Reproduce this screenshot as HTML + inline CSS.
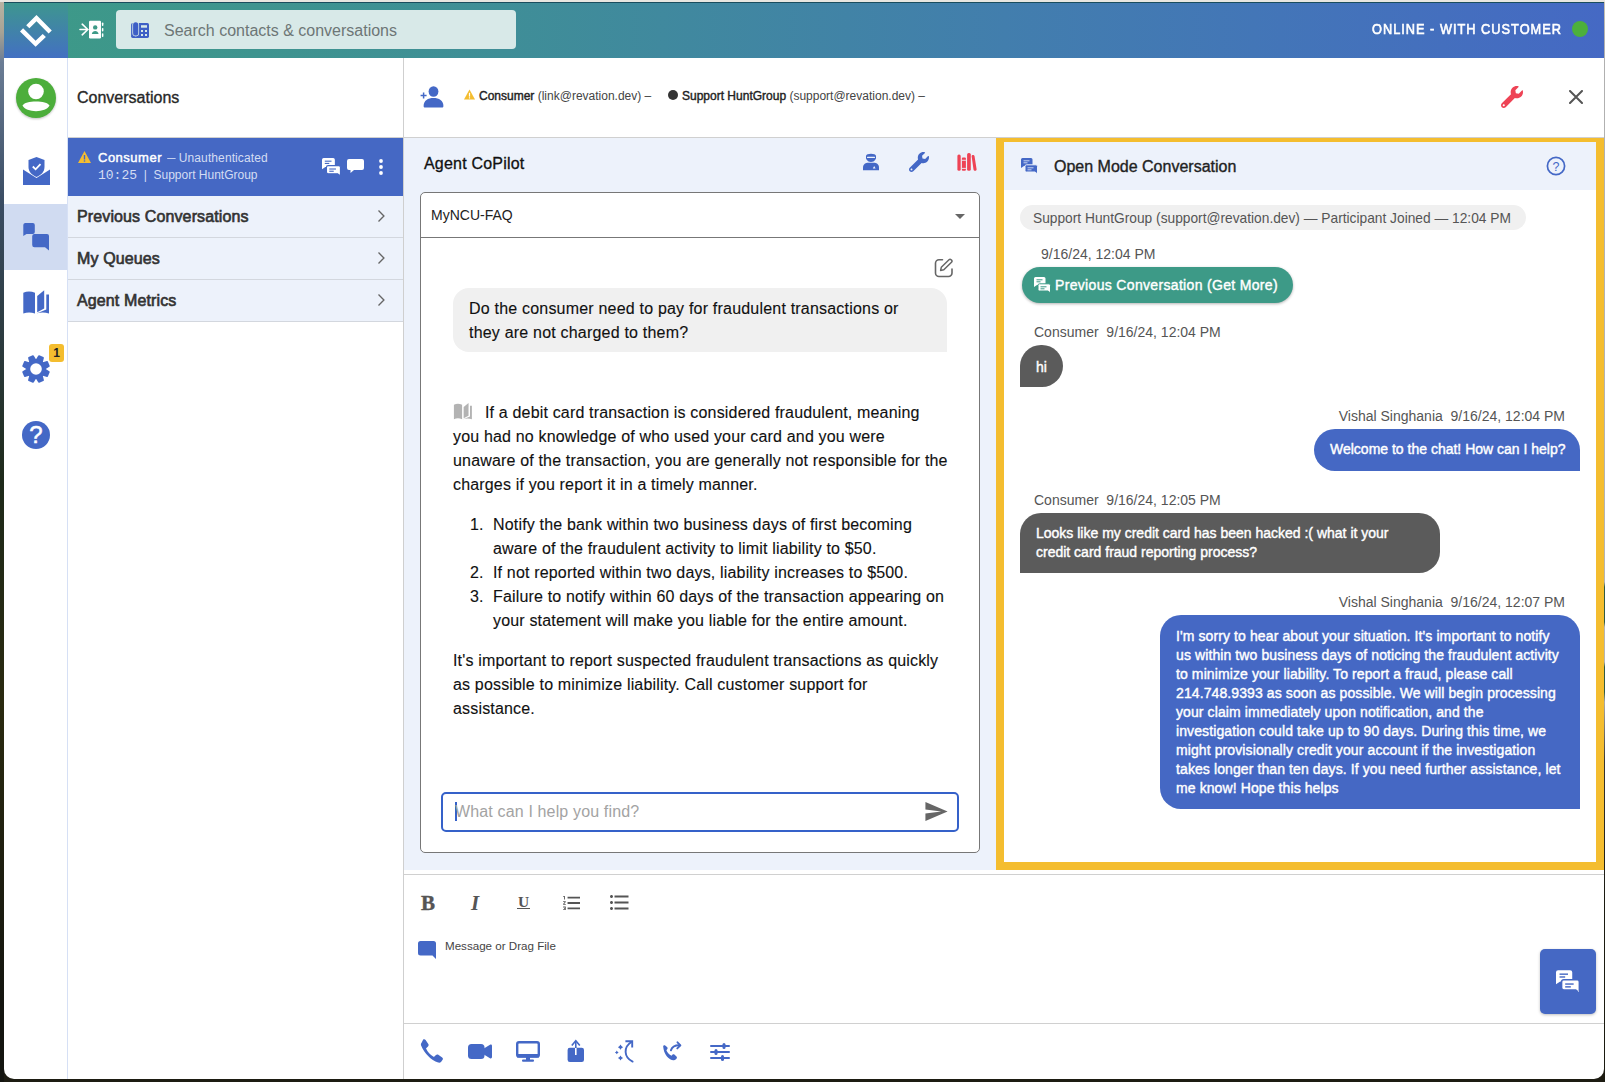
<!DOCTYPE html>
<html><head><meta charset="utf-8">
<style>
*{box-sizing:border-box;margin:0;padding:0}
html,body{width:1605px;height:1082px;overflow:hidden;background:#1c1a10;font-family:"Liberation Sans",sans-serif;color:#222}
.a{position:absolute}
svg{display:block}
#desk{position:absolute;left:0;top:0;width:1605px;height:1082px;background:linear-gradient(180deg,#e8e6e0 0,#e8e6e0 2px,#1d1c12 2px)}
#deskl{position:absolute;left:0;top:2px;width:4px;height:1080px;background:linear-gradient(180deg,#b9b3a3 0,#a7a395 30px,#6b7d95 60px,#3a4c63 200px,#1e2a1a 480px,#2a2a10 700px,#141510 1000px)}
#win{position:absolute;left:4px;top:2px;width:1600px;height:1077px;background:#fff;border-radius:0 0 10px 10px}
#hdr{left:4px;top:2px;width:1600px;height:56px;background:linear-gradient(90deg,#3d9a87 0,#3f8e97 500px,#427ead 1000px,#4376b7 1250px,#4569c4 1600px);border-top:1px solid #1a4d5e}
#logo{left:4px;top:2px;width:64px;height:56px;background:linear-gradient(180deg,#3e968f 0,#4370c2 100%);border-top:1px solid #1a4d5e}
#search{left:116px;top:10px;width:400px;height:39px;background:#d8e9e8;border-radius:4px}
#search .ph{position:absolute;left:48px;top:12px;font-size:16px;color:#6d7676;white-space:nowrap}
#status{left:1372px;top:21px;font-size:14px;color:#fff;letter-spacing:1.1px;-webkit-text-stroke:0.6px #fff;white-space:nowrap;transform:scaleX(0.912);transform-origin:0 0}
#dot{left:1572px;top:21px;width:16px;height:16px;border-radius:50%;background:#4cb03c}
#navb{left:67px;top:58px;width:1px;height:1021px;background:#d6e0f5}
#listb{left:403px;top:58px;width:1px;height:1021px;background:#cfcfcf}
#hline{left:68px;top:137px;width:1536px;height:1px;background:#d0d0d0}
.navsel{left:4px;top:204px;width:63px;height:66px;background:#d0dbf1}
.t{position:absolute;white-space:nowrap}
.row{left:68px;width:335px;height:42px;background:#edf2fb;border-bottom:1px solid #d3d7de}
.row .lb{position:absolute;left:9px;top:12px;font-size:16px;color:#333;letter-spacing:0.12px;-webkit-text-stroke:0.65px #333}
.row svg{position:absolute;left:303px;top:10px}
#copilot{left:404px;top:138px;width:592px;height:732px;background:#edf2fb}
#cbox{left:420px;top:192px;width:560px;height:661px;border:1px solid #777;border-radius:5px;background:#fff}
#omc{left:996px;top:138px;width:608px;height:732px;border:8px solid #f4bd2f;border-top-width:4px;background:#fff}
#omh{left:1004px;top:142px;width:592px;height:48px;background:#edf2fb}
#edline{left:404px;top:874px;width:1200px;height:1px;background:#d0d0d0}
#botline{left:404px;top:1023px;width:1200px;height:1px;background:#d0d0d0}
</style></head><body>
<div id="desk"></div><div id="deskl"></div><div class="a" style="left:1604px;top:2px;width:1px;height:1080px;background:linear-gradient(180deg,#c9c3b3 0,#b0b0b0 40px,#b4b4b4 580px,#2f5a45 585px,#2f5a45 620px,#b4b4b4 625px,#b4b4b4 660px,#2f5a45 665px,#2f5a45 690px,#aaa 700px,#333 760px,#1a1a10 900px)"></div>
<div id="win"></div>
<div id="hdr" class="a"></div>
<div id="logo" class="a"></div>
<!-- logo mark -->
<svg class="a" style="left:0;top:0" width="60" height="56" viewBox="0 0 60 56">
  <path d="M26.2 25.2 L36.5 15.1 L51.8 30.4 L48.6 33.6 L36.5 21.3 L29.4 28.3 Z" fill="#fff"/>
  <path d="M20 31.4 L23.1 28.3 L35.6 40.8 L42.7 33.9 L45.9 37.1 L35.6 46.8 Z" fill="#fff"/>
</svg>
<!-- contact import icon -->
<svg class="a" style="left:78px;top:19px" width="28" height="22" viewBox="78 19 28 22">
  <path d="M80 29.5 H88 M82.2 24.2 L87.8 29.5 L82.2 34.8" stroke="#fff" stroke-width="1.6" fill="none" stroke-linecap="round" stroke-linejoin="round"/>
  <rect x="89" y="20.7" width="12" height="17.7" rx="1.2" fill="#fff"/>
  <circle cx="95.2" cy="27.4" r="2.2" fill="#3d9a87"/>
  <path d="M91.8 34 C92.3 30 98.1 30 98.6 34 Z" fill="#3d9a87"/>
  <rect x="101.9" y="22.5" width="1.5" height="3.5" rx="0.7" fill="#fff"/><rect x="101.9" y="28" width="1.5" height="3.5" rx="0.7" fill="#fff"/><rect x="101.9" y="33.3" width="1.5" height="3.7" rx="0.7" fill="#fff"/>
</svg>
<div id="search" class="a">
  <div class="ph">Search contacts &amp; conversations</div>
</div>
<svg class="a" style="left:130px;top:21px" width="20" height="18" viewBox="130 21 20 18">
  <rect x="131.1" y="23" width="17.9" height="14.9" rx="1.6" fill="#3e5fc6"/>
  <rect x="132.3" y="21.4" width="6.8" height="15" rx="3.3" fill="#d8e9e8"/>
  <rect x="133.1" y="22.2" width="5.2" height="13.3" rx="2.6" fill="#3e5fc6"/>
  <rect x="141" y="25.2" width="6" height="2.5" fill="#d8e9e8"/>
  <rect x="141" y="30" width="2" height="2" fill="#d8e9e8"/><rect x="145" y="30" width="2" height="2" fill="#d8e9e8"/>
  <rect x="141" y="34" width="2" height="2" fill="#d8e9e8"/><rect x="145" y="34" width="2" height="2" fill="#d8e9e8"/>
</svg>
<div id="status" class="a">ONLINE - WITH CUSTOMER</div>
<div id="dot" class="a"></div>

<!-- NAV -->
<div id="navb" class="a"></div>
<div class="a navsel"></div>
<svg class="a" style="left:16px;top:78px;filter:drop-shadow(0 1px 1px rgba(0,0,0,.25))" width="40" height="40" viewBox="0 0 40 40">
  <circle cx="20" cy="20" r="20" fill="#4cae3b"/>
  <circle cx="20" cy="13.5" r="7.8" fill="#fff"/>
  <path d="M6.5 27.5 C9 22 31 22 33.5 27.5 C30 35 10 35 6.5 27.5Z" fill="#fff"/>
</svg>
<svg class="a" style="left:23px;top:157px" width="27" height="28" viewBox="0 0 27 28">
  <path d="M0 12.5 L13.5 21 L27 12.5 V28 H0 Z" fill="#4468c6"/>
  <path d="M13.5 0 L21.5 3 V10 C21.5 15 18 18 13.5 20 C9 18 5.5 15 5.5 10 V3 Z" fill="#4468c6"/>
  <path d="M9.8 9.5 L12.6 12.3 L17.5 7.2" stroke="#fff" stroke-width="1.8" fill="none"/>
</svg>
<svg class="a" style="left:22px;top:222px" width="28" height="30" viewBox="22 222 28 30">
  <path d="M25 223 H32.8 a2 2 0 0 1 2 2 V232 a2 2 0 0 1 -2 2 H26.5 L23.3 236 V225 a2 2 0 0 1 1.7 -2Z" fill="#4468c6"/>
  <path d="M34.5 234 H47 a2 2 0 0 1 2 2 V250.5 L45 247.3 H34.5 a2.3 2.3 0 0 1 -2.3 -2.3 V236.3 a2.3 2.3 0 0 1 2.3 -2.3Z" fill="#4468c6"/>
</svg>
<svg class="a" style="left:22px;top:289px" width="28" height="26" viewBox="22 289 28 26">
  <path d="M23.3 292.8 C27 291.2 31 291.2 35 292.8 V313.6 C31 312 27 312 23.3 313.6Z" fill="#4468c6"/>
  <path d="M37.2 296 L44.2 290.3 V308.5 L37.2 312.3Z" fill="#4468c6"/>
  <path d="M46.3 294.5 H49 V313.6 C45 312.2 40.5 312.2 36.5 313.6 L46.3 309.6Z" fill="#4468c6"/>
</svg>
<svg class="a" style="left:22px;top:355px" width="28" height="28" viewBox="0 0 28 28">
  <path d="M22.50 14.38 L26.85 16.94 L25.17 21.01 L20.28 19.74Z M19.74 20.28 L21.01 25.17 L16.94 26.85 L14.38 22.50Z M13.62 22.50 L11.06 26.85 L6.99 25.17 L8.26 20.28Z M7.72 19.74 L2.83 21.01 L1.15 16.94 L5.50 14.38Z M5.50 13.62 L1.15 11.06 L2.83 6.99 L7.72 8.26Z M8.26 7.72 L6.99 2.83 L11.06 1.15 L13.62 5.50Z M14.38 5.50 L16.94 1.15 L21.01 2.83 L19.74 7.72Z M20.28 8.26 L25.17 6.99 L26.85 11.06 L22.50 13.62Z " fill="#4468c6" stroke="#4468c6" stroke-width="1.8" stroke-linejoin="round"/>
  <circle cx="14" cy="14" r="9.6" fill="#4468c6"/>
  <circle cx="14" cy="14" r="5.8" fill="#fff"/>
</svg>
<div class="a" style="left:49px;top:344px;width:15px;height:18px;background:#f4bd2f;border-radius:3px;font-size:12px;font-weight:bold;color:#222;text-align:center;line-height:18px">1</div>
<svg class="a" style="left:22px;top:421px" width="28" height="28" viewBox="0 0 28 28">
  <circle cx="14" cy="14" r="14" fill="#4468c6"/>
  <text x="14" y="22.3" font-family="Liberation Sans" font-size="24" fill="#fff" text-anchor="middle" stroke="#fff" stroke-width="0.5">?</text>
</svg>

<!-- LIST -->
<div id="listb" class="a"></div>
<div id="hline" class="a"></div>
<div class="t" style="left:77px;top:89px;font-size:16px;color:#282828;-webkit-text-stroke:0.35px #282828">Conversations</div>
<div class="a" style="left:68px;top:138px;width:335px;height:58px;background:#4568c4"></div>
<svg class="a" style="left:78px;top:151px" width="13" height="12" viewBox="0 0 13 12"><path d="M6.5 0 L13 12 H0Z" fill="#f4bd2f"/><rect x="5.8" y="4" width="1.4" height="4.5" fill="#4568c4"/><rect x="5.8" y="9.3" width="1.4" height="1.4" fill="#4568c4"/></svg>
<div class="t" style="left:98px;top:150px;font-size:13px;color:#fff"><span style="-webkit-text-stroke:0.45px #fff;letter-spacing:0.5px">Consumer</span> <span style="color:#d4ddf3;font-size:12px;letter-spacing:0.1px"><span style="display:inline-block;transform:scaleX(1.25);margin:0 1px 0 2px">–</span> Unauthenticated</span></div>
<div class="t" style="left:98px;top:168px;font-size:12px;color:#d4ddf3"><span style="font-family:'Liberation Mono';font-size:13px">10:25</span> &nbsp;|&nbsp; Support HuntGroup</div>
<svg class="a" style="left:322px;top:158px" width="19" height="18" viewBox="0 0 17 16">
  <path d="M1.5 0 H10 a1.5 1.5 0 0 1 1.5 1.5 V6.5 a1.5 1.5 0 0 1 -1.5 1.5 H3 L0 10 V1.5 A1.5 1.5 0 0 1 1.5 0Z" fill="#fff"/>
  <path d="M5.5 6.8 H15 a1.5 1.5 0 0 1 1.5 1.5 V16 L14 14 H5.5 a1.5 1.5 0 0 1 -1.5 -1.5 V8.3 a1.5 1.5 0 0 1 1.5 -1.5Z" fill="#fff" stroke="#4568c4" stroke-width="1"/>
  <rect x="2.5" y="2.3" width="6" height="1" fill="#4568c4"/><rect x="2.5" y="4.3" width="4" height="1" fill="#4568c4"/>
  <rect x="6.5" y="9.3" width="6" height="1" fill="#4568c4"/><rect x="6.5" y="11.3" width="4" height="1" fill="#4568c4"/>
</svg>
<svg class="a" style="left:347px;top:159px" width="17" height="16" viewBox="0 0 17 16"><path d="M2 0 H15 a2 2 0 0 1 2 2 V9 a2 2 0 0 1 -2 2 H7 L3.5 14 V11 H2 a2 2 0 0 1 -2 -2 V2 a2 2 0 0 1 2 -2Z" fill="#fff"/></svg>
<svg class="a" style="left:378px;top:159px" width="6" height="16" viewBox="0 0 6 16"><circle cx="3" cy="2" r="1.9" fill="#fff"/><circle cx="3" cy="8" r="1.9" fill="#fff"/><circle cx="3" cy="14" r="1.9" fill="#fff"/></svg>

<div class="a row" style="top:196px"><div class="lb">Previous Conversations</div><svg width="20" height="20" viewBox="0 0 24 24"><path d="M9 5.5 L15.5 12 L9 18.5" stroke="#666" stroke-width="1.6" fill="none"/></svg></div>
<div class="a row" style="top:238px"><div class="lb">My Queues</div><svg width="20" height="20" viewBox="0 0 24 24"><path d="M9 5.5 L15.5 12 L9 18.5" stroke="#666" stroke-width="1.6" fill="none"/></svg></div>
<div class="a row" style="top:280px"><div class="lb">Agent Metrics</div><svg width="20" height="20" viewBox="0 0 24 24"><path d="M9 5.5 L15.5 12 L9 18.5" stroke="#666" stroke-width="1.6" fill="none"/></svg></div>

<!-- MAIN HEADER -->
<svg class="a" style="left:420px;top:85px" width="24" height="23" viewBox="0 0 24 23">
  <ellipse cx="13.5" cy="6.5" rx="4.9" ry="5.3" fill="#4468c6"/>
  <path d="M3.6 21 C3.6 15.5 8 13 13.5 13 C19 13 23.4 15.5 23.4 21 C23.4 22 22.8 22.5 22 22.5 H5 C4.2 22.5 3.6 22 3.6 21Z" fill="#4468c6"/>
  <path d="M0.6 10.6 H6.6 M3.6 7.6 V13.6" stroke="#4468c6" stroke-width="1.5"/>
</svg>
<svg class="a" style="left:464px;top:89px" width="11" height="11" viewBox="0 0 13 12"><path d="M6.5 0 L13 12 H0Z" fill="#f4bd2f"/><rect x="5.8" y="4" width="1.4" height="4.5" fill="#fff"/><rect x="5.8" y="9.3" width="1.4" height="1.4" fill="#fff"/></svg>
<div class="t" style="left:479px;top:89px;font-size:12px;color:#222"><span style="-webkit-text-stroke:0.4px #222">Consumer</span> <span style="color:#444">(link@revation.dev) –</span></div>
<div class="a" style="left:668px;top:90px;width:10px;height:10px;border-radius:50%;background:#333"></div>
<div class="t" style="left:682px;top:89px;font-size:12px;color:#222"><span style="-webkit-text-stroke:0.4px #222">Support HuntGroup</span> <span style="color:#444">(support@revation.dev) –</span></div>
<svg class="a" style="left:1501px;top:86px" width="22" height="22" viewBox="0 0 512 512"><path fill="#ee4355" d="M507.73 109.1c-2.24-9.03-13.54-12.09-20.12-5.51l-74.36 74.36-67.88-11.31-11.31-67.88 74.36-74.36c6.62-6.62 3.430-17.9-5.66-20.16-47.38-11.74-99.55.91-136.58 37.93-39.64 39.64-50.55 97.1-34.05 147.2L18.74 402.76c-24.99 24.99-24.99 65.51 0 90.5 24.99 24.99 65.51 24.99 90.5 0l213.21-213.21c50.12 16.71 107.47 5.68 147.37-34.22 37.07-37.07 49.7-89.32 37.91-136.73zM64 472c-13.25 0-24-10.75-24-24 0-13.26 10.75-24 24-24s24 10.74 24 24c0 13.25-10.75 24-24 24z"/></svg>
<svg class="a" style="left:1569px;top:90px" width="14" height="14" viewBox="0 0 14 14"><path d="M1 1 L13 13 M13 1 L1 13" stroke="#555" stroke-width="2" stroke-linecap="round"/></svg>


<!-- COPILOT -->
<div id="copilot" class="a"></div>
<div id="cbox" class="a"></div>
<div class="t" style="left:424px;top:155px;font-size:16px;color:#111;letter-spacing:0.2px;-webkit-text-stroke:0.3px #111">Agent CoPilot</div>
<svg class="a" style="left:863px;top:153px" width="16" height="18" viewBox="0 0 16 18">
  <path d="M3 3 C3 0 13 0 13 3 V5 C13 6 12.5 6.5 12 7 C11 9.5 5 9.5 4 7 C3.5 6.5 3 6 3 5Z" fill="#4468c6"/>
  <rect x="4" y="3.8" width="8" height="1.1" rx="0.5" fill="#edf2fb"/>
  <path d="M0 17.3 V14.5 C0 11.2 3 9.8 5 9.8 H11 C13 9.8 16 11.2 16 14.5 V17.3Z" fill="#4468c6"/>
  <path d="M11.2 13 L12.6 15.5 H9.8Z" fill="#edf2fb"/>
</svg>
<svg class="a" style="left:909px;top:152px" width="20" height="20" viewBox="0 0 512 512"><path fill="#4468c6" d="M507.73 109.1c-2.24-9.03-13.54-12.09-20.12-5.51l-74.36 74.36-67.88-11.31-11.31-67.88 74.36-74.36c6.62-6.62 3.43-17.9-5.66-20.16-47.38-11.74-99.55.91-136.58 37.93-39.64 39.64-50.55 97.1-34.05 147.2L18.74 402.76c-24.99 24.99-24.99 65.51 0 90.5 24.99 24.99 65.51 24.99 90.5 0l213.21-213.21c50.12 16.71 107.47 5.68 147.37-34.22 37.07-37.07 49.7-89.32 37.91-136.73zM64 472c-13.25 0-24-10.75-24-24 0-13.26 10.75-24 24-24s24 10.74 24 24c0 13.25-10.75 24-24 24z"/></svg>
<svg class="a" style="left:957px;top:153px" width="20" height="18" viewBox="0 0 20 18">
  <rect x="0.4" y="1.6" width="3.3" height="16.2" rx="1.5" fill="#ee4355"/>
  <rect x="4.9" y="4.5" width="4" height="13.3" rx="1" fill="#ee4355"/>
  <rect x="4.9" y="6.8" width="4" height="0.9" fill="#edf2fb"/><rect x="4.9" y="14.9" width="4" height="0.9" fill="#edf2fb"/>
  <rect x="10.1" y="0" width="3.7" height="17.8" rx="1.6" fill="#ee4355"/>
  <path d="M14.6 3 C14.6 1.5 17.4 1.5 17.5 3 L19.6 16.3 C19.8 18.2 16.7 18.3 16.5 16.5Z" fill="#ee4355"/>
</svg>
<div class="a" style="left:421px;top:237px;width:558px;height:1px;background:#777"></div>
<div class="t" style="left:431px;top:207px;font-size:14px;color:#222">MyNCU-FAQ</div>
<svg class="a" style="left:955px;top:214px" width="10" height="5" viewBox="0 0 10 5"><path d="M0 0 H10 L5 5Z" fill="#666"/></svg>
<svg class="a" style="left:934px;top:258px" width="20" height="20" viewBox="0 0 20 20">
  <path d="M8.5 1.8 H5 a3.5 3.5 0 0 0 -3.5 3.5 V15 a3.5 3.5 0 0 0 3.5 3.5 H14.5 a3.5 3.5 0 0 0 3.5 -3.5 V11" stroke="#666" stroke-width="1.6" fill="none" stroke-linecap="round"/>
  <path d="M6.6 12.4 L7.3 9.3 L15 1.7 a1.5 1.5 0 0 1 2.1 0 L17.5 2.1 a1.5 1.5 0 0 1 0 2.1 L9.8 11.8Z" stroke="#666" stroke-width="1.5" fill="none" stroke-linejoin="round"/>
</svg>
<div class="a" style="left:453px;top:288px;width:494px;height:64px;background:#f0f0f0;border-radius:16px 16px 0 16px"></div>
<div class="a" style="left:469px;top:297px;width:480px;font-size:16px;line-height:24px;color:#111;letter-spacing:0.2px;-webkit-text-stroke:0.12px #111">Do the consumer need to pay for fraudulent transactions or<br>they are not charged to them?</div>
<svg class="a" style="left:453.3px;top:402.4px" width="19.6" height="18.2" viewBox="22 289 28 26">
  <path d="M23.3 292.8 C27 291.2 31 291.2 35 292.8 V313.6 C31 312 27 312 23.3 313.6Z" fill="#b3b3b3"/>
  <path d="M37.2 296 L44.2 290.3 V308.5 L37.2 312.3Z" fill="#b3b3b3"/>
  <path d="M46.3 294.5 H49 V313.6 C45 312.2 40.5 312.2 36.5 313.6 L46.3 309.6Z" fill="#b3b3b3"/>
</svg>
<div class="a" id="ans" style="left:453px;top:401px;width:520px;font-size:16px;line-height:24px;color:#111;letter-spacing:0.17px;-webkit-text-stroke:0.12px #111">
  <div style="text-indent:32px">If a debit card transaction is considered fraudulent, meaning<br>you had no knowledge of who used your card and you were<br>unaware of the transaction, you are generally not responsible for the<br>charges if you report it in a timely manner.</div>
  <div style="margin-top:16px;position:relative">
    <div style="position:relative;padding-left:40px"><span class="a" style="left:17px">1.</span>Notify the bank within two business days of first becoming<br>aware of the fraudulent activity to limit liability to $50.</div>
    <div style="position:relative;padding-left:40px"><span class="a" style="left:17px">2.</span>If not reported within two days, liability increases to $500.</div>
    <div style="position:relative;padding-left:40px"><span class="a" style="left:17px">3.</span>Failure to notify within 60 days of the transaction appearing on<br>your statement will make you liable for the entire amount.</div>
  </div>
  <div style="margin-top:16px">It's important to report suspected fraudulent transactions as quickly<br>as possible to minimize liability. Call customer support for<br>assistance.</div>
</div>
<div class="a" style="left:441px;top:792px;width:518px;height:40px;border:2px solid #3561c9;border-radius:5px;background:#fff"></div>
<div class="a" style="left:455px;top:802px;width:2px;height:19px;background:#3561c9"></div>
<div class="t" style="left:455px;top:803px;font-size:16px;color:#a3a3a3;letter-spacing:0.15px">What can I help you find?</div>
<svg class="a" style="left:925px;top:802px" width="23" height="19" viewBox="2 3 21 18"><path fill="#666" d="M2.01 21L23 12 2.01 3 2 10l15 2-15 2z"/></svg>


<!-- OPEN MODE -->
<div id="omc" class="a"></div>
<div id="omh" class="a"></div>
<svg class="a" style="left:1021px;top:158px" width="17" height="16" viewBox="0 0 17 16">
  <path d="M1.5 0 H10 a1.5 1.5 0 0 1 1.5 1.5 V6.5 a1.5 1.5 0 0 1 -1.5 1.5 H3 L0 10 V1.5 A1.5 1.5 0 0 1 1.5 0Z" fill="#4468c6"/>
  <path d="M5.5 6.8 H15 a1.5 1.5 0 0 1 1.5 1.5 V16 L14 14 H5.5 a1.5 1.5 0 0 1 -1.5 -1.5 V8.3 a1.5 1.5 0 0 1 1.5 -1.5Z" fill="#4468c6" stroke="#edf2fb" stroke-width="1"/>
  <rect x="2.5" y="2.3" width="6" height="1" fill="#c9d4f0"/><rect x="2.5" y="4.3" width="4" height="1" fill="#c9d4f0"/>
  <rect x="6.5" y="9.3" width="6" height="1" fill="#c9d4f0"/><rect x="6.5" y="11.3" width="4" height="1" fill="#c9d4f0"/>
</svg>
<div class="t" style="left:1054px;top:157px;font-size:16px;color:#222;-webkit-text-stroke:0.35px #222;margin-top:1px">Open Mode Conversation</div>
<svg class="a" style="left:1546px;top:156px" width="20" height="20" viewBox="0 0 20 20"><circle cx="10" cy="10" r="8.6" stroke="#4468c6" stroke-width="1.7" fill="none"/><text x="10" y="14.6" font-family="Liberation Sans" font-size="12.5" fill="#4468c6" text-anchor="middle">?</text></svg>

<div class="a" style="left:1020px;top:205px;width:506px;height:25px;background:#f0f0f0;border-radius:12.5px"></div>
<div class="t" style="left:1033px;top:211px;font-size:13.75px;color:#555">Support HuntGroup (support@revation.dev) — Participant Joined — 12:04 PM</div>
<div class="t" style="left:1041px;top:246px;font-size:14px;color:#555">9/16/24, 12:04 PM</div>
<div class="a" style="left:1022px;top:267px;width:271px;height:36px;background:#3d9a87;border-radius:18px;box-shadow:0 1px 3px rgba(0,0,0,.3)"></div>
<svg class="a" style="left:1034px;top:277px" width="17" height="16" viewBox="0 0 17 16">
  <path d="M1.5 0 H10 a1.5 1.5 0 0 1 1.5 1.5 V6.5 a1.5 1.5 0 0 1 -1.5 1.5 H3 L0 10 V1.5 A1.5 1.5 0 0 1 1.5 0Z" fill="#fff"/>
  <path d="M5.5 6.8 H15 a1.5 1.5 0 0 1 1.5 1.5 V16 L14 14 H5.5 a1.5 1.5 0 0 1 -1.5 -1.5 V8.3 a1.5 1.5 0 0 1 1.5 -1.5Z" fill="#fff" stroke="#3d9a87" stroke-width="1"/>
  <rect x="2.5" y="2.3" width="6" height="1" fill="#3d9a87"/><rect x="2.5" y="4.3" width="4" height="1" fill="#3d9a87"/>
  <rect x="6.5" y="9.3" width="6" height="1" fill="#3d9a87"/><rect x="6.5" y="11.3" width="4" height="1" fill="#3d9a87"/>
</svg>
<div class="t" style="left:1055px;top:277px;font-size:14px;color:#fff;letter-spacing:0.33px;-webkit-text-stroke:0.4px #fff">Previous Conversation (Get More)</div>

<div class="t" style="left:1034px;top:324px;font-size:14px;color:#555">Consumer&nbsp; 9/16/24, 12:04 PM</div>
<div class="a" style="left:1020px;top:345px;width:43px;height:42px;background:#5b5b5b;border-radius:21px 21px 21px 0"></div>
<div class="t" style="left:1036px;top:359px;font-size:14px;color:#fff;-webkit-text-stroke:0.4px #fff">hi</div>

<div class="t" style="right:40px;top:408px;font-size:14px;color:#555">Vishal Singhania&nbsp; 9/16/24, 12:04 PM</div>
<div class="a" style="left:1314px;top:429px;width:266px;height:42px;background:#4568c4;border-radius:21px 21px 0 21px"></div>
<div class="t" style="left:1330px;top:441px;font-size:14px;color:#fff;-webkit-text-stroke:0.4px #fff">Welcome to the chat! How can I help?</div>

<div class="t" style="left:1034px;top:492px;font-size:14px;color:#555">Consumer&nbsp; 9/16/24, 12:05 PM</div>
<div class="a" style="left:1020px;top:513px;width:420px;height:60px;background:#5b5b5b;border-radius:21px 21px 21px 0"></div>
<div class="a" style="left:1036px;top:524px;width:400px;font-size:14px;line-height:19px;color:#fff;-webkit-text-stroke:0.4px #fff">Looks like my credit card has been hacked :( what it your<br>credit card fraud reporting process?</div>

<div class="t" style="right:40px;top:594px;font-size:14px;color:#555">Vishal Singhania&nbsp; 9/16/24, 12:07 PM</div>
<div class="a" style="left:1160px;top:615px;width:420px;height:194px;background:#4568c4;border-radius:21px 21px 0 21px"></div>
<div class="a" style="left:1176px;top:627px;width:400px;font-size:14px;line-height:19px;color:#fff;letter-spacing:0.1px;-webkit-text-stroke:0.4px #fff">I'm sorry to hear about your situation. It's important to notify<br>us within two business days of noticing the fraudulent activity<br>to minimize your liability. To report a fraud, please call<br>214.748.9393 as soon as possible. We will begin processing<br>your claim immediately upon notification, and the<br>investigation could take up to 90 days. During this time, we<br>might provisionally credit your account if the investigation<br>takes longer than ten days. If you need further assistance, let<br>me know! Hope this helps</div>


<!-- EDITOR -->
<div id="edline" class="a"></div>
<div id="botline" class="a"></div>
<div class="t" style="left:421px;top:891px;font-family:'Liberation Serif';font-weight:bold;font-size:21px;color:#555;-webkit-text-stroke:0.4px #555">B</div>
<div class="t" style="left:471px;top:891px;font-family:'Liberation Serif';font-style:italic;font-weight:bold;font-size:21px;color:#555">I</div>
<div class="t" style="left:517px;top:895px;font-family:'Liberation Serif';font-weight:bold;font-size:15.5px;color:#555;border-bottom:1.5px solid #555;line-height:13px;padding:0 1px">U</div>
<svg class="a" style="left:563px;top:895px" width="18" height="16" viewBox="2 3 20 18"><path fill="#555" d="M2 17h2v.5H3v1h1v.5H2v1h3v-4H2v1zm1-9h1V4H2v1h1v3zm-1 3h1.8L2 13.1v.9h3v-1H3.2L5 10.9V10H2v1zm5-6v2h14V5H7zm0 14h14v-2H7v2zm0-6h14v-2H7v2z"/></svg>
<svg class="a" style="left:610px;top:894px" width="19" height="17" viewBox="2.5 4 19 16"><path fill="#555" d="M4 10.5c-.83 0-1.5.67-1.5 1.5s.67 1.5 1.5 1.5 1.5-.67 1.5-1.5-.67-1.5-1.5-1.5zm0-6c-.83 0-1.5.67-1.5 1.5S3.17 7.5 4 7.5 5.5 6.83 5.5 6 4.83 4.5 4 4.5zm0 12c-.83 0-1.5.68-1.5 1.5s.68 1.5 1.5 1.5 1.5-.68 1.5-1.5-.67-1.5-1.5-1.5zM7 19h14v-2H7v2zm0-6h14v-2H7v2zm0-8v2h14V5H7z"/></svg>
<svg class="a" style="left:418px;top:941px" width="18" height="18" viewBox="0 0 18 18"><path d="M2.5 0 H15.5 a2.5 2.5 0 0 1 2.5 2.5 V18 L14.5 14.5 H2.5 A2.5 2.5 0 0 1 0 12 V2.5 A2.5 2.5 0 0 1 2.5 0Z" fill="#4468c6"/></svg>
<div class="t" style="left:445px;top:939px;font-size:11.6px;color:#444">Message or Drag File</div>

<div class="a" style="left:1540px;top:949px;width:56px;height:65px;background:#4568c4;border-radius:5px;box-shadow:0 1px 3px rgba(0,0,0,.25)"></div>
<svg class="a" style="left:1556px;top:970px" width="24" height="23" viewBox="0 0 17 16">
  <path d="M1.5 0 H10 a1.5 1.5 0 0 1 1.5 1.5 V6.5 a1.5 1.5 0 0 1 -1.5 1.5 H3 L0 10 V1.5 A1.5 1.5 0 0 1 1.5 0Z" fill="#fff"/>
  <path d="M5.5 6.8 H15 a1.5 1.5 0 0 1 1.5 1.5 V16 L14 14 H5.5 a1.5 1.5 0 0 1 -1.5 -1.5 V8.3 a1.5 1.5 0 0 1 1.5 -1.5Z" fill="#fff" stroke="#4568c4" stroke-width="1"/>
  <rect x="2.5" y="2.3" width="6" height="1" fill="#4568c4"/><rect x="2.5" y="4.3" width="4" height="1" fill="#4568c4"/>
  <rect x="6.5" y="9.3" width="6" height="1" fill="#4568c4"/><rect x="6.5" y="11.3" width="4" height="1" fill="#4568c4"/>
</svg>

<svg class="a" style="left:420px;top:1039px" width="23" height="24" viewBox="0 0 23 24"><path fill="#4468c6" d="M3.2 0.6 C4 0 5 0.2 5.6 1 L8.3 5 C8.8 5.8 8.7 6.8 8 7.4 L6.4 8.9 C6.1 9.2 6 9.7 6.3 10.1 C7.8 13.2 10.2 15.8 13.2 17.6 C13.6 17.9 14.1 17.8 14.4 17.5 L16 15.9 C16.6 15.3 17.6 15.2 18.3 15.7 L22.2 18.4 C23 19 23.2 20 22.6 20.8 L21.2 22.7 C20.5 23.6 19.3 24 18.2 23.6 C10.8 21 4.5 14.6 1.1 6.5 C0.7 5.4 0.9 4.2 1.7 3.4Z"/></svg>
<svg class="a" style="left:468px;top:1044px" width="24" height="15" viewBox="0 0 24 15"><rect x="0" y="0" width="16.5" height="15" rx="3.5" fill="#4468c6"/><path d="M15 5 L22 0.8 C23 0.3 24 0.8 24 2 V13 C24 14.2 23 14.7 22 14.2 L15 10Z" fill="#4468c6"/></svg>
<svg class="a" style="left:516px;top:1041px" width="24" height="21" viewBox="0 0 24 21"><rect x="1.2" y="1.2" width="21.6" height="14.3" rx="1.8" stroke="#4468c6" stroke-width="2.4" fill="none"/><rect x="1" y="13" width="22" height="3.5" fill="#4468c6"/><rect x="10" y="16" width="4" height="3" fill="#4468c6"/><rect x="6" y="18.5" width="12" height="2.2" rx="1" fill="#4468c6"/></svg>
<svg class="a" style="left:565px;top:1038px" width="22" height="26" viewBox="565 1038 22 26">
  <rect x="567.6" y="1047.8" width="16.4" height="14.2" rx="2.2" fill="#4468c6"/>
  <path d="M575.8 1041 V1048" stroke="#4468c6" stroke-width="1.6"/>
  <path d="M575.8 1048 V1055" stroke="#fff" stroke-width="1.6"/>
  <path d="M571.8 1045.6 L575.8 1040.8 L579.8 1045.6" stroke="#4468c6" stroke-width="1.6" fill="none"/>
</svg>
<svg class="a" style="left:612px;top:1038px" width="24" height="26" viewBox="612 1038 24 26">
  <path d="M631.3 1042 C623.5 1047 623.5 1057 632.6 1061.6" stroke="#4468c6" stroke-width="1.9" fill="none" stroke-linecap="round"/>
  <path d="M625.4 1041.3 H632.2 V1047.6" stroke="#4468c6" stroke-width="1.9" fill="none"/>
  <path d="M620.5 1044.6000000000001 Q621.228 1046.472 623.1 1047.2 Q621.228 1047.928 620.5 1049.8 Q619.772 1047.928 617.9 1047.2 Q619.772 1046.472 620.5 1044.6000000000001Z M616.8 1050.5 Q617.332 1051.8680000000002 618.6999999999999 1052.4 Q617.332 1052.932 616.8 1054.3000000000002 Q616.2679999999999 1052.932 614.9 1052.4 Q616.2679999999999 1051.8680000000002 616.8 1050.5Z M620.5 1055.4 Q621.228 1057.272 623.1 1058 Q621.228 1058.728 620.5 1060.6 Q619.772 1058.728 617.9 1058 Q619.772 1057.272 620.5 1055.4Z" fill="#4468c6"/>
</svg>
<svg class="a" style="left:660px;top:1040px" width="24" height="23" viewBox="660 1040 24 23">
  <path d="M663.2 1046.8 C663 1045.6 664.2 1045 665.2 1045.6 L667 1047.1 C667.7 1047.7 667.8 1048.6 667.2 1049.3 L666.4 1050.2 C667.4 1052.6 669.2 1054.5 671.5 1055.7 L672.4 1054.8 C673 1054.2 674 1054.2 674.6 1054.8 L676.5 1056.5 C677.3 1057.3 677 1058.5 676 1059.2 L674.8 1059.9 C673.6 1060.5 672.2 1060.4 671 1059.8 C667 1057.6 664 1053.8 663.2 1046.8Z" fill="#4468c6"/>
  <path d="M670.9 1050.4 C672 1046.8 675 1045.2 679.6 1045.3" stroke="#4468c6" stroke-width="1.9" fill="none" stroke-linecap="round"/>
  <path d="M677.5 1042.3 L680.4 1045.3 L677.3 1048.4" stroke="#4468c6" stroke-width="1.9" fill="none" stroke-linecap="round" stroke-linejoin="round"/>
</svg>
<svg class="a" style="left:710px;top:1043px" width="20" height="18" viewBox="0 0 20 18"><rect x="0" y="2" width="20" height="2" rx="1" fill="#4468c6"/><rect x="0" y="8" width="20" height="2" rx="1" fill="#4468c6"/><rect x="0" y="14" width="20" height="2" rx="1" fill="#4468c6"/><rect x="12.5" y="0" width="3" height="6" rx="1.5" fill="#4468c6"/><rect x="4.5" y="6" width="3" height="6" rx="1.5" fill="#4468c6"/><rect x="11" y="12" width="3" height="6" rx="1.5" fill="#4468c6"/></svg>

</body></html>
